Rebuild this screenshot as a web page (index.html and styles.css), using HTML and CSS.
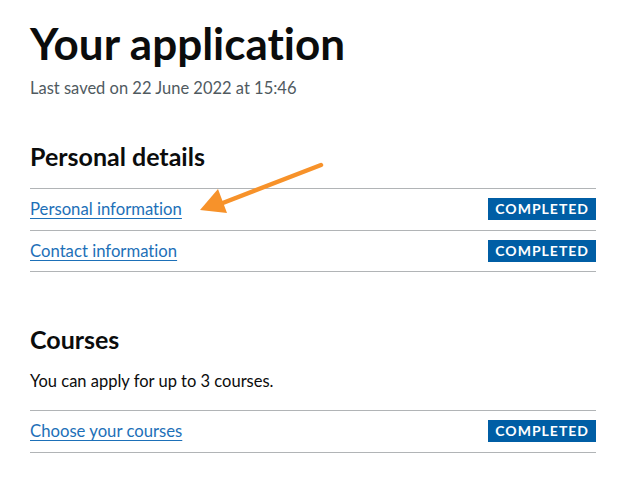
FILE: index.html
```html
<!DOCTYPE html>
<html lang="en">
<head>
<meta charset="utf-8">
<title>Your application</title>
<link rel="stylesheet" href="styles.css">
</head>
<body>
<main class="page">
  <h1 class="title">Your application</h1>
  <p class="saved">Last saved on 22 June 2022 at 15:46</p>

  <section class="section">
    <h2 class="section-title">Personal details</h2>
    <ul class="task-list">
      <li class="task">
        <a class="task-link" href="#">Personal information</a>
        <strong class="tag">Completed</strong>
      </li>
      <li class="task">
        <a class="task-link" href="#">Contact information</a>
        <strong class="tag">Completed</strong>
      </li>
    </ul>
  </section>

  <section class="section section-courses">
    <h2 class="section-title">Courses</h2>
    <p class="body">You can apply for up to 3 courses.</p>
    <ul class="task-list">
      <li class="task">
        <a class="task-link" href="#">Choose your courses</a>
        <strong class="tag">Completed</strong>
      </li>
    </ul>
  </section>

  <svg class="arrow" width="140" height="70" viewBox="0 0 140 70" aria-hidden="true">
    <line x1="126" y1="8" x2="20" y2="49" stroke="#f7922a" stroke-width="4.5" stroke-linecap="round"/>
    <polygon points="5,53 23,32 32,56" fill="#f7922a"/>
  </svg>
</main>
</body>
</html>
```

FILE: styles.css
```css
html, body {
  margin: 0;
  padding: 0;
  background: #ffffff;
}

body {
  font-family: Lato, "Noto Sans", "Liberation Sans", Arial, sans-serif;
  font-variant-ligatures: none;
  color: #0b0c0c;
}

.page {
  position: relative;
  width: 566px;
  padding: 18px 27px 0 30px;
}

.title {
  font-size: 44px;
  font-weight: 700;
  line-height: 50px;
  margin: 0 0 10px;
}

.saved {
  font-size: 16.5px;
  line-height: 20px;
  color: #505a5f;
  margin: 0;
}

.section {
  margin-top: 43px;
}

.section-courses {
  margin-top: 52px;
}

.section-title {
  font-size: 25px;
  font-weight: 700;
  line-height: 30px;
  margin: 0 0 17px;
}

.body {
  font-size: 16.5px;
  line-height: 20px;
  margin: 3px 0 19px;
}

.task-list {
  list-style: none;
  margin: 0;
  padding: 0;
  border-top: 1px solid #b1b4b6;
}

.task {
  display: flex;
  justify-content: space-between;
  align-items: center;
  height: 40.5px;
  border-bottom: 1px solid #b1b4b6;
}

.task-link {
  font-size: 16.7px;
  line-height: 20px;
  color: #1d70b8;
  text-decoration: underline;
  text-underline-offset: 3px;
  text-decoration-thickness: 1px;
}

.tag {
  background: #005ea5;
  color: #ffffff;
  font-size: 14px;
  font-weight: 700;
  line-height: 22px;
  padding: 0 7px;
  letter-spacing: 1px;
  text-transform: uppercase;
}

.arrow {
  position: absolute;
  left: 195px;
  top: 157px;
}
```
